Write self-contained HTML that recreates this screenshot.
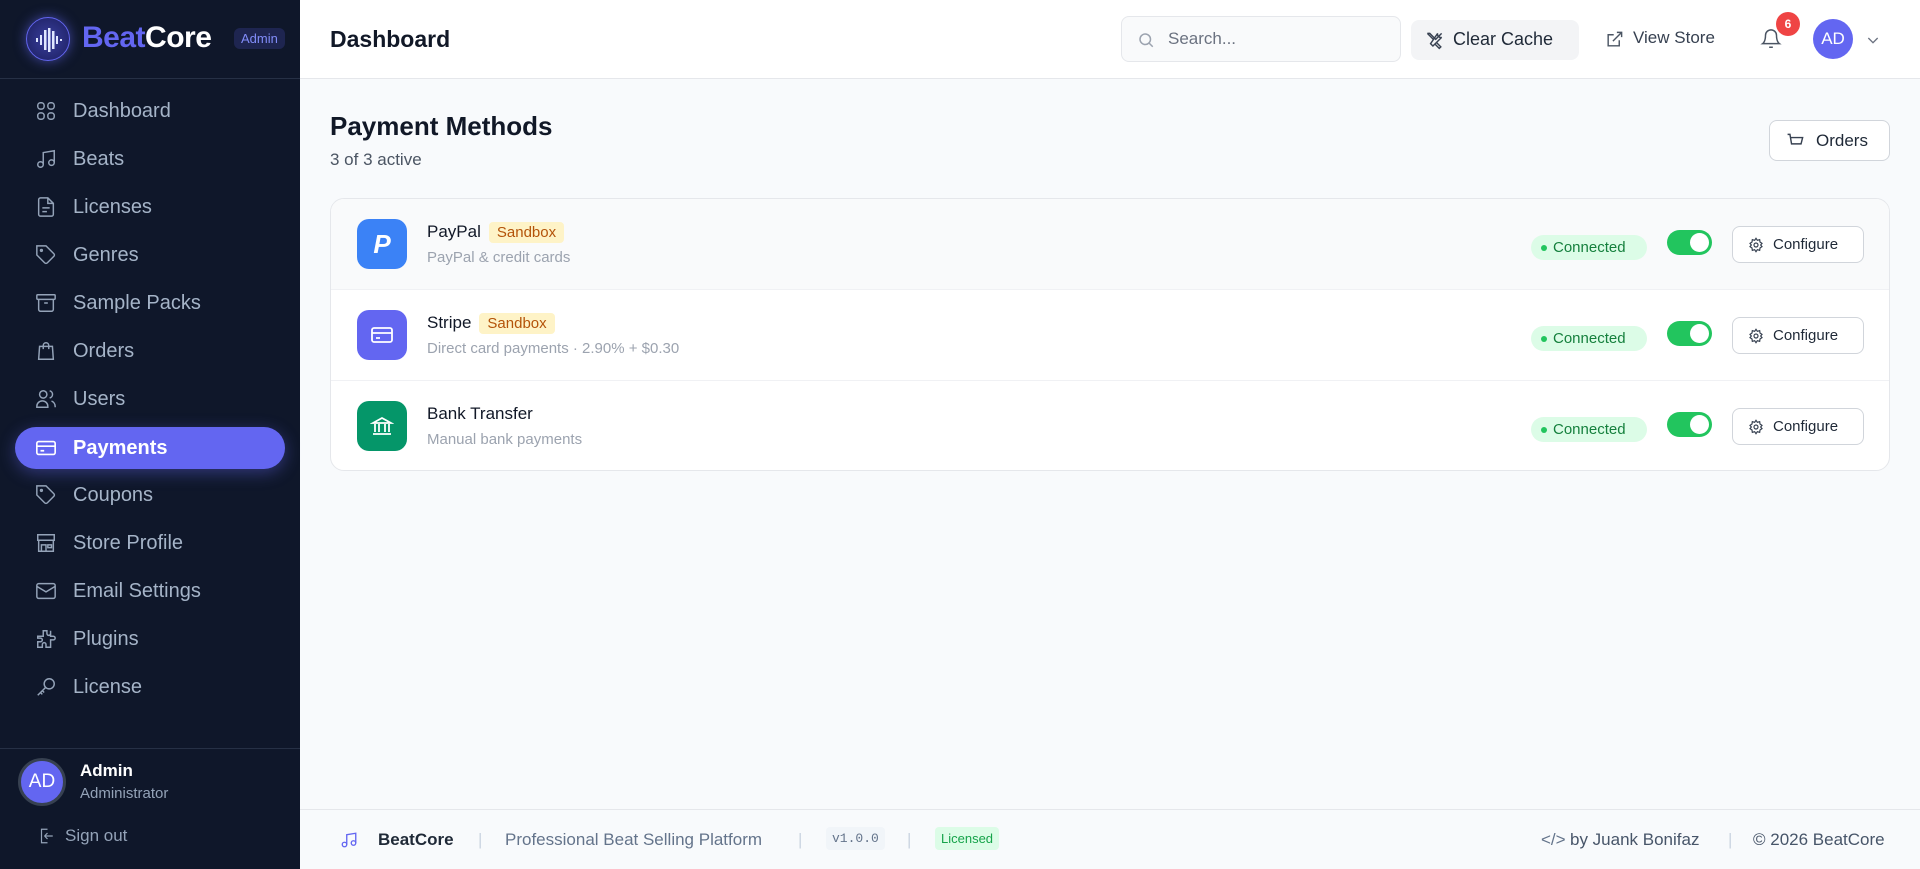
<!DOCTYPE html>
<html><head><meta charset="utf-8"><style>
*{box-sizing:border-box;margin:0;padding:0}
body{width:1920px;height:869px;overflow:hidden;font-family:"Liberation Sans",sans-serif;background:#f8fafc;position:relative;color:#111827}
.sb{position:absolute;left:0;top:0;width:300px;height:869px;background:#0f172a}
.sbh{height:79px;border-bottom:1px solid #263045;position:relative}
.logo{position:absolute;left:26px;top:17px;width:44px;height:44px;border-radius:50%;background:radial-gradient(circle,#3a3f9e,#1b1e5e);border:1px solid #6366f1;box-shadow:0 0 12px rgba(99,102,241,.6)}
.brand{position:absolute;left:82px;top:21px;font-size:30px;font-weight:bold;letter-spacing:-.5px}
.adm{position:absolute;left:234px;top:28px;background:#1e2550;color:#818cf8;font-size:13px;padding:3px 7px;border-radius:6px}
.nav{position:absolute;left:15px;width:270px;height:42px;border-radius:21px;color:#a5b4c8;font-size:20px;display:flex;align-items:center}
.nav svg{position:absolute;left:20px;top:10px}
.nav span{position:absolute;left:58px}
.nav.act{background:#6366f1;color:#fff;font-weight:bold;box-shadow:0 4px 16px rgba(99,102,241,.4)}
.hdr{position:absolute;left:300px;top:0;right:0;height:79px;background:#fff;border-bottom:1px solid #e5e7eb}
.ft{position:absolute;left:300px;right:0;top:809px;height:60px;border-top:1px solid #e5e7eb;background:#f8fafc;font-size:17px;color:#64748b}
.ft>*{position:absolute;top:20px}
.card{position:absolute;left:330px;top:198px;width:1560px;height:273px;background:#fff;border:1px solid #e5e7eb;border-radius:14px;overflow:hidden}
.row{position:absolute;left:0;width:100%;height:91px;border-bottom:1px solid #f0f1f4}
.ic{position:absolute;left:26px;top:20px;width:50px;height:50px;border-radius:12px;display:flex;align-items:center;justify-content:center}
.nm{position:absolute;left:96px;top:23px;font-size:17px;color:#111827}
.sbx{display:inline-block;background:#fef3c7;color:#b45309;font-size:15px;padding:2px 8px;border-radius:4px;margin-left:8px}
.sub{position:absolute;left:96px;top:50px;font-size:15px;color:#9ca3af}
.con{position:absolute;left:1200px;top:36px;width:116px;height:25px;background:#dcfce7;color:#15803d;border-radius:13px;font-size:15px;line-height:25px;padding-left:22px}
.con:before{content:"";position:absolute;left:10px;top:10px;width:6px;height:6px;border-radius:50%;background:#22c55e}
.tg{position:absolute;left:1336px;top:31px;width:45px;height:25px;border-radius:13px;background:#22c55e}
.tg:after{content:"";position:absolute;right:3px;top:3px;width:19px;height:19px;border-radius:50%;background:#fff}
.cfg{position:absolute;left:1401px;top:27px;width:132px;height:37px;border:1px solid #d1d5db;border-radius:8px;background:#fff;font-size:15px;color:#1f2937;line-height:35px;padding-left:40px}
.cfg svg{position:absolute;left:15px;top:10px}
</style></head><body>
<div class="sb">
 <div class="sbh">
  <div class="logo"><svg width="44" height="44" viewBox="0 0 44 44"><g fill="#e0e7ff"><rect x="9" y="20" width="2" height="4"/><rect x="13" y="17" width="2" height="10"/><rect x="17" y="12" width="2.5" height="20"/><rect x="21" y="10" width="2.5" height="24"/><rect x="25" y="13" width="2.5" height="18"/><rect x="29" y="18" width="2" height="8"/><rect x="33" y="21" width="2" height="2"/></g></svg></div>
  <div class="brand"><span style="color:#6366f1">Beat</span><span style="color:#fff">Core</span></div>
  <div class="adm">Admin</div>
 </div>
 <div class="nav" style="top:90px"><svg width="22" height="22" viewBox="0 0 24 24" fill="none" stroke="#94a3b8" stroke-width="1.6"><rect x="3" y="3" width="7" height="7" rx="3"/><rect x="14" y="3" width="7" height="7" rx="3"/><rect x="3" y="14" width="7" height="7" rx="3"/><rect x="14" y="14" width="7" height="7" rx="3"/></svg><span>Dashboard</span></div>
 <div class="nav" style="top:138px"><svg width="22" height="22" viewBox="0 0 24 24" fill="none" stroke="#94a3b8" stroke-width="1.6"><path d="M9 18V5l12-2v13"/><circle cx="6" cy="18" r="3"/><circle cx="18" cy="16" r="3"/></svg><span>Beats</span></div>
 <div class="nav" style="top:186px"><svg width="22" height="22" viewBox="0 0 24 24" fill="none" stroke="#94a3b8" stroke-width="1.6"><path d="M14 2H6a2 2 0 0 0-2 2v16a2 2 0 0 0 2 2h12a2 2 0 0 0 2-2V8z"/><path d="M14 2v6h6M8 13h8M8 17h5"/></svg><span>Licenses</span></div>
 <div class="nav" style="top:234px"><svg width="22" height="22" viewBox="0 0 24 24" fill="none" stroke="#94a3b8" stroke-width="1.6"><path d="M20.6 13.4l-7.2 7.2a2 2 0 0 1-2.8 0L2 12V2h10l8.6 8.6a2 2 0 0 1 0 2.8z"/><circle cx="7" cy="7" r="1"/></svg><span>Genres</span></div>
 <div class="nav" style="top:282px"><svg width="22" height="22" viewBox="0 0 24 24" fill="none" stroke="#94a3b8" stroke-width="1.6"><rect x="2" y="3" width="20" height="5" rx="1"/><path d="M4 8v11a2 2 0 0 0 2 2h12a2 2 0 0 0 2-2V8M10 12h4"/></svg><span>Sample Packs</span></div>
 <div class="nav" style="top:330px"><svg width="22" height="22" viewBox="0 0 24 24" fill="none" stroke="#94a3b8" stroke-width="1.6"><path d="M5 7h14l1 14H4z"/><path d="M9 10V6a3 3 0 0 1 6 0v4"/></svg><span>Orders</span></div>
 <div class="nav" style="top:378px"><svg width="22" height="22" viewBox="0 0 24 24" fill="none" stroke="#94a3b8" stroke-width="1.6"><circle cx="9" cy="7" r="4"/><path d="M2 21v-1a6 6 0 0 1 12 0v1zM16 3.1a4 4 0 0 1 0 7.8M22 21v-1a6 6 0 0 0-4-5.7"/></svg><span>Users</span></div>
 <div class="nav act" style="top:427px"><svg width="22" height="22" viewBox="0 0 24 24" fill="none" stroke="#fff" stroke-width="1.8"><rect x="2" y="5" width="20" height="14" rx="2"/><path d="M2 10h20M6 15h4"/></svg><span>Payments</span></div>
 <div class="nav" style="top:474px"><svg width="22" height="22" viewBox="0 0 24 24" fill="none" stroke="#94a3b8" stroke-width="1.6"><path d="M20.6 13.4l-7.2 7.2a2 2 0 0 1-2.8 0L2 12V2h10l8.6 8.6a2 2 0 0 1 0 2.8z"/><circle cx="7" cy="7" r="1"/></svg><span>Coupons</span></div>
 <div class="nav" style="top:522px"><svg width="22" height="22" viewBox="0 0 24 24" fill="none" stroke="#94a3b8" stroke-width="1.6"><path d="M3 3h18v6H3zM4 9v12h16V9M7 21v-7h5v7M14 14h4v3h-4z"/></svg><span>Store Profile</span></div>
 <div class="nav" style="top:570px"><svg width="22" height="22" viewBox="0 0 24 24" fill="none" stroke="#94a3b8" stroke-width="1.6"><rect x="2" y="4" width="20" height="16" rx="2"/><path d="M2 7l10 6 10-6"/></svg><span>Email Settings</span></div>
 <div class="nav" style="top:618px"><svg width="22" height="22" viewBox="0 0 24 24" fill="none" stroke="#94a3b8" stroke-width="1.6"><path d="M9 3h4v3a2 2 0 0 0 4 0V3h0v6h3a2 2 0 0 1 0 4h-3v8h-5v-3a2 2 0 0 0-4 0v3H3v-6h3a2 2 0 0 0 0-4H3V9h6z"/></svg><span>Plugins</span></div>
 <div class="nav" style="top:666px"><svg width="22" height="22" viewBox="0 0 24 24" fill="none" stroke="#94a3b8" stroke-width="1.6"><circle cx="15.5" cy="8.5" r="5.5"/><path d="M11.5 12.5L3 21M6 18l2 2M8 16l2 2"/></svg><span>License</span></div>
 <div style="position:absolute;left:0;top:748px;width:300px;border-top:1px solid #263045"></div>
 <div style="position:absolute;left:18px;top:758px;width:48px;height:48px;border-radius:50%;background:#6366f1;border:3px solid #374151;color:#fff;font-size:19px;text-align:center;line-height:42px">AD</div>
 <div style="position:absolute;left:80px;top:761px;color:#fff;font-size:17px;font-weight:bold">Admin</div>
 <div style="position:absolute;left:80px;top:785px;color:#94a3b8;font-size:15px">Administrator</div>
 <svg style="position:absolute;left:37px;top:827px" width="18" height="18" viewBox="0 0 24 24" fill="none" stroke="#94a3b8" stroke-width="1.6"><path d="M14 3h-8v18h8M10 12h11M10 12l4-4M10 12l4 4"/></svg>
 <div style="position:absolute;left:65px;top:826px;color:#94a3b8;font-size:17px">Sign out</div>
</div>
<div class="hdr">
 <div style="position:absolute;left:30px;top:26px;font-size:23px;font-weight:bold">Dashboard</div>
 <div style="position:absolute;left:821px;top:16px;width:280px;height:46px;border:1px solid #e5e7eb;border-radius:8px;background:#f9fafb"><svg style="position:absolute;left:15px;top:14px" width="18" height="18" viewBox="0 0 24 24" fill="none" stroke="#9ca3af" stroke-width="2"><circle cx="11" cy="11" r="7"/><path d="M21 21l-5-5"/></svg><span style="position:absolute;left:46px;top:12px;color:#6b7280;font-size:17px">Search...</span></div>
 <div style="position:absolute;left:1111px;top:20px;width:168px;height:40px;border-radius:8px;background:#f3f4f6"><svg style="position:absolute;left:14px;top:11px" width="19" height="19" viewBox="0 0 24 24" fill="none" stroke="#374151" stroke-width="1.8"><path d="M3 3l8 8M3 3h3l8 8M14 14l6 6-2 2-6-6M21 3l-8 8M16 3a4 4 0 0 0 5 5l-11 11-3-3z"/></svg><span style="position:absolute;left:42px;top:9px;color:#1f2937;font-size:18px">Clear Cache</span></div>
 <svg style="position:absolute;left:1305px;top:30px" width="19" height="19" viewBox="0 0 24 24" fill="none" stroke="#4b5563" stroke-width="1.8"><path d="M18 13v7H4V6h7M15 3h6v6M10 14L21 3"/></svg>
 <div style="position:absolute;left:1333px;top:28px;color:#374151;font-size:17px">View Store</div>
 <svg style="position:absolute;left:1460px;top:28px" width="22" height="22" viewBox="0 0 24 24" fill="none" stroke="#4b5563" stroke-width="1.6"><path d="M6 8a6 6 0 0 1 12 0c0 7 3 9 3 9H3s3-2 3-9M10 21h4"/></svg>
 <div style="position:absolute;left:1476px;top:12px;width:24px;height:24px;border-radius:50%;background:#ef4444;color:#fff;font-size:12px;font-weight:bold;text-align:center;line-height:24px">6</div>
 <div style="position:absolute;left:1513px;top:19px;width:40px;height:40px;border-radius:50%;background:#6366f1;color:#fff;font-size:17px;text-align:center;line-height:40px">AD</div>
 <svg style="position:absolute;left:1565px;top:32px" width="16" height="16" viewBox="0 0 24 24" fill="none" stroke="#6b7280" stroke-width="2"><path d="M5 9l7 7 7-7"/></svg>
</div>
<div style="position:absolute;left:330px;top:111px;font-size:26px;font-weight:bold">Payment Methods</div>
<div style="position:absolute;left:330px;top:150px;font-size:17px;color:#4b5563">3 of 3 active</div>
<div style="position:absolute;left:1769px;top:120px;width:121px;height:41px;border:1px solid #d1d5db;border-radius:8px;background:#fff"><svg style="position:absolute;left:16px;top:11px" width="19" height="19" viewBox="0 0 24 24" fill="none" stroke="#374151" stroke-width="1.8"><path d="M2 3h3l2 12h12l2-8H6M9 20h.01M18 20h.01"/></svg><span style="position:absolute;left:46px;top:10px;font-size:17px;color:#1f2937">Orders</span></div>
<div class="card">
 <div class="row" style="top:0;background:#f9fafb">
  <div class="ic" style="background:#3b82f6"><span style="color:#fff;font-size:26px;font-weight:bold;font-style:italic">P</span></div>
  <div class="nm">PayPal<span class="sbx">Sandbox</span></div><div class="sub">PayPal &amp; credit cards</div>
  <div class="con">Connected</div><div class="tg"></div>
  <div class="cfg"><svg width="16" height="16" viewBox="0 0 24 24" fill="none" stroke="#374151" stroke-width="1.8"><circle cx="12" cy="12" r="3"/><path d="M12 2l2 3 3.5-1 .5 3.5 3 2-2 2.5 2 2.5-3 2-.5 3.5-3.5-1-2 3-2-3-3.5 1-.5-3.5-3-2 2-2.5-2-2.5 3-2 .5-3.5 3.5 1z"/></svg>Configure</div>
 </div>
 <div class="row" style="top:91px">
  <div class="ic" style="background:#6366f1"><svg width="24" height="24" viewBox="0 0 24 24" fill="none" stroke="#fff" stroke-width="1.8"><rect x="2" y="5" width="20" height="14" rx="2"/><path d="M2 10h20M6 15h4"/></svg></div>
  <div class="nm">Stripe<span class="sbx">Sandbox</span></div><div class="sub">Direct card payments · 2.90% + $0.30</div>
  <div class="con">Connected</div><div class="tg"></div>
  <div class="cfg"><svg width="16" height="16" viewBox="0 0 24 24" fill="none" stroke="#374151" stroke-width="1.8"><circle cx="12" cy="12" r="3"/><path d="M12 2l2 3 3.5-1 .5 3.5 3 2-2 2.5 2 2.5-3 2-.5 3.5-3.5-1-2 3-2-3-3.5 1-.5-3.5-3-2 2-2.5-2-2.5 3-2 .5-3.5 3.5 1z"/></svg>Configure</div>
 </div>
 <div class="row" style="top:182px;border:none">
  <div class="ic" style="background:#059669"><svg width="24" height="24" viewBox="0 0 24 24" fill="none" stroke="#fff" stroke-width="1.8"><path d="M3 9l9-5 9 5zM5 10v8M9 10v8M15 10v8M19 10v8M3 20h18"/></svg></div>
  <div class="nm">Bank Transfer</div><div class="sub">Manual bank payments</div>
  <div class="con">Connected</div><div class="tg"></div>
  <div class="cfg"><svg width="16" height="16" viewBox="0 0 24 24" fill="none" stroke="#374151" stroke-width="1.8"><circle cx="12" cy="12" r="3"/><path d="M12 2l2 3 3.5-1 .5 3.5 3 2-2 2.5 2 2.5-3 2-.5 3.5-3.5-1-2 3-2-3-3.5 1-.5-3.5-3-2 2-2.5-2-2.5 3-2 .5-3.5 3.5 1z"/></svg>Configure</div>
 </div>
</div>
<div class="ft">
 <svg style="left:40px;top:20px" width="18" height="20" viewBox="0 0 24 24" fill="none" stroke="#6366f1" stroke-width="1.8"><path d="M9 18V5l12-2v13"/><circle cx="6" cy="18" r="3"/><circle cx="18" cy="16" r="3"/></svg>
 <b style="left:78px;color:#1f2937">BeatCore</b>
 <span style="left:178px;color:#cbd5e1">|</span>
 <span style="left:205px">Professional Beat Selling Platform</span>
 <span style="left:498px;color:#cbd5e1">|</span>
 <span style="left:526px;top:17px;background:#f1f5f9;color:#64748b;font-family:'Liberation Mono',monospace;font-size:13px;padding:4px 6px;border-radius:4px">v1.0.0</span>
 <span style="left:607px;color:#cbd5e1">|</span>
 <span style="left:635px;top:17px;background:#dcfce7;color:#16a34a;font-size:13px;padding:4px 6px;border-radius:4px">Licensed</span>
 <span style="left:1241px;color:#64748b">&lt;/&gt;</span>
 <span style="left:1270px;color:#475569">by Juank Bonifaz</span>
 <span style="left:1428px;color:#cbd5e1">|</span>
 <span style="left:1453px;color:#475569">© 2026 BeatCore</span>
</div>
</body></html>
